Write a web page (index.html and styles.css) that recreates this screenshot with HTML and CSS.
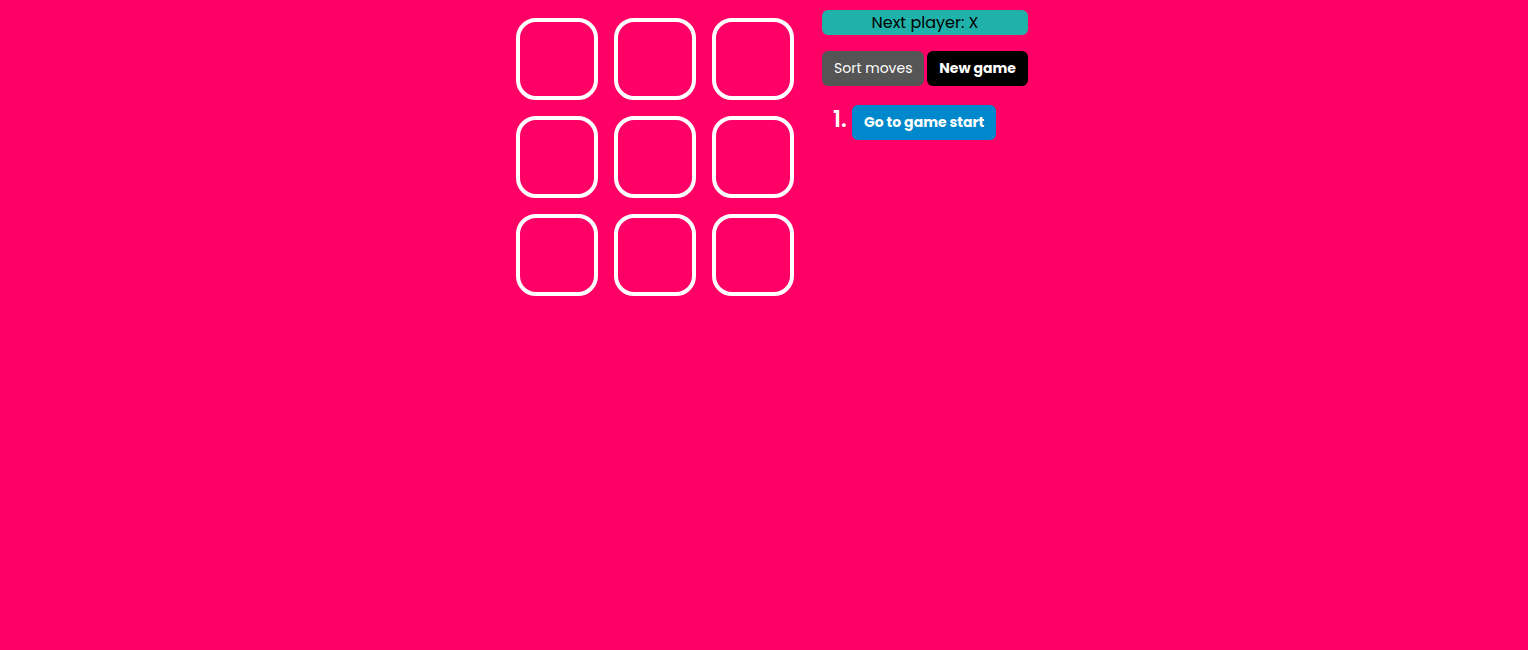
FILE: index.html
```html
<!DOCTYPE html>
<html lang="en">
<head>
<meta charset="utf-8">
<meta name="viewport" content="width=device-width, initial-scale=1">
<title>Tic Tac Toe</title>
<link rel="stylesheet" href="styles.css">
</head>
<body>
<main class="game">
  <div class="board">
    <button class="square" type="button" aria-label="Square 1"></button>
    <button class="square" type="button" aria-label="Square 2"></button>
    <button class="square" type="button" aria-label="Square 3"></button>
    <button class="square" type="button" aria-label="Square 4"></button>
    <button class="square" type="button" aria-label="Square 5"></button>
    <button class="square" type="button" aria-label="Square 6"></button>
    <button class="square" type="button" aria-label="Square 7"></button>
    <button class="square" type="button" aria-label="Square 8"></button>
    <button class="square" type="button" aria-label="Square 9"></button>
  </div>
  <section class="info">
    <div class="status">Next player: X</div>
    <div class="actions">
      <button class="button button-sort" type="button">Sort moves</button>
      <button class="button button-new" type="button">New game</button>
    </div>
    <ol class="moves">
      <li class="move"><button class="button button-move" type="button">Go to game start</button></li>
    </ol>
  </section>
</main>
</body>
</html>
```

FILE: styles.css
```css
* {
  box-sizing: border-box;
}

body {
  margin: 0;
  background: #ff0066;
  font-family: Poppins, Inter, sans-serif;
  font-size: 16px;
}

.game {
  display: flex;
  justify-content: center;
  align-items: flex-start;
  gap: 28px;
  padding: 10px 0 10px 16px;
}

.board {
  display: grid;
  grid-template-columns: repeat(3, 82px);
  gap: 16px;
  padding-top: 8px;
}

.square {
  height: 82px;
  padding: 0;
  background: transparent;
  border: 4px solid #fff;
  border-radius: 20px;
  cursor: pointer;
}

.info {
  width: 206px;
}

.status {
  border-radius: 6px;
  background: lightseagreen;
  color: #000;
  line-height: 25px;
  text-align: center;
}

.actions {
  display: flex;
  justify-content: space-between;
  margin-top: 16px;
}

.button {
  padding: 0 12px;
  border: 0;
  border-radius: 6px;
  color: #fff;
  font-family: inherit;
  font-size: 14px;
  font-weight: 700;
  line-height: 35px;
  white-space: nowrap;
  cursor: pointer;
}

.button-sort {
  background: #555;
  font-weight: 400;
}

.button-new {
  background: #000;
}

.button-move {
  background: #0088cc;
}

.moves {
  margin: 17px 0 0;
  padding-left: 30px;
  color: #fff;
}

.move::marker {
  font-size: 22px;
  font-weight: 600;
}
```
